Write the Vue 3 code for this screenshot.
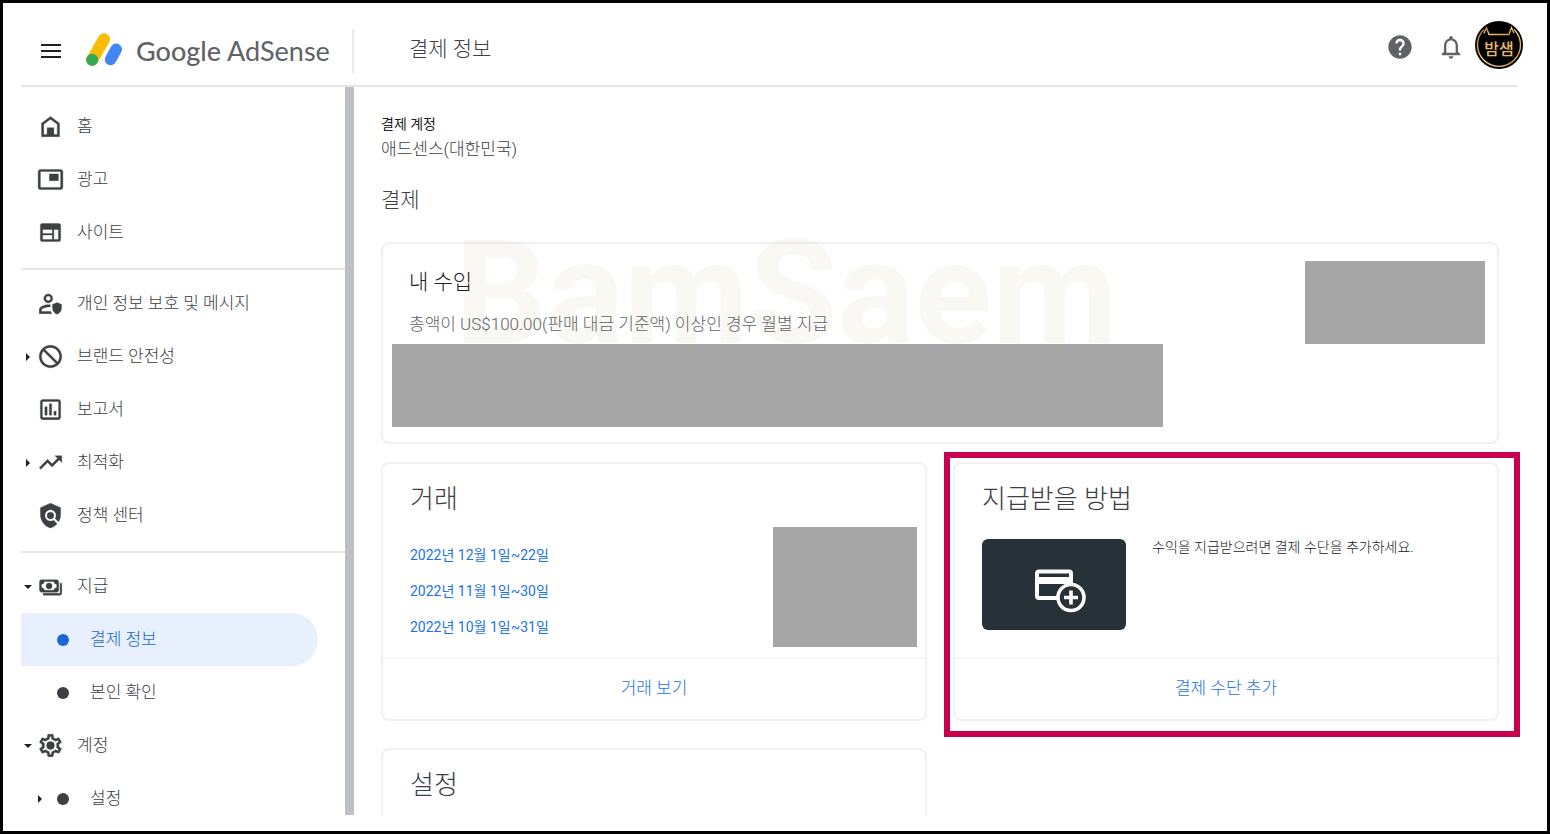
<template>
  <div class="page">
    <header class="header">
      <div class="header-left">
        <button class="menu-btn" aria-label="메뉴">
          <svg width="20" height="14" viewBox="0 0 20 14">
            <path d="M0 1h20M0 7h20M0 13h20" stroke="#202124" stroke-width="2" />
          </svg>
        </button>
        <a class="logo" href="#">
          <svg width="36" height="37" viewBox="0 0 36 37">
            <path d="M18 6.3L6.3 26.7" stroke="#fbbc04" stroke-width="12" stroke-linecap="round" />
            <path d="M30.2 16.2L24.6 26.5" stroke="#4285f4" stroke-width="11.5" stroke-linecap="round" />
            <circle cx="6.2" cy="26.8" r="6.1" fill="#34a853" />
          </svg>
          <span class="logo-text"><b>Google</b> AdSense</span>
        </a>
      </div>
      <h1 class="header-title">결제 정보</h1>
      <div class="header-right">
        <button class="icon-btn help" aria-label="도움말">
          <svg width="28" height="28" viewBox="0 0 24 24" fill="#5f6368">
            <path d="M12 2C6.48 2 2 6.48 2 12s4.48 10 10 10 10-4.48 10-10S17.52 2 12 2zm1 17h-2v-2h2v2zm2.07-7.75l-.9.92C13.45 12.9 13 13.5 13 15h-2v-.5c0-1.1.45-2.1 1.17-2.83l1.24-1.26c.37-.36.59-.86.59-1.41 0-1.1-.9-2-2-2s-2 .9-2 2H8c0-2.21 1.79-4 4-4s4 1.79 4 4c0 .88-.36 1.68-.93 2.25z" />
          </svg>
        </button>
        <button class="icon-btn bell" aria-label="알림">
          <svg width="28" height="28" viewBox="0 0 24 24" fill="#5f6368">
            <path d="M12 22c1.1 0 2-.9 2-2h-4c0 1.1.89 2 2 2zm6-6v-5c0-3.07-1.64-5.64-4.5-6.32V4c0-.83-.67-1.5-1.5-1.5s-1.5.67-1.5 1.5v.68C7.63 5.36 6 7.92 6 11v5l-2 2v1h16v-1l-2-2zm-2 1H8v-6c0-2.48 1.51-4.5 4-4.5s4 2.02 4 4.5v6z" />
          </svg>
        </button>
        <button class="avatar" aria-label="계정">
          <svg width="48" height="48" viewBox="0 0 48 48">
            <defs>
              <linearGradient id="gold" x1="0" y1="0" x2="1" y2="1">
                <stop offset="0" stop-color="#b57a2c" />
                <stop offset="0.5" stop-color="#f3cf85" />
                <stop offset="1" stop-color="#c98f3c" />
              </linearGradient>
            </defs>
            <circle cx="24" cy="24" r="24" fill="#000" />
            <path d="M9 8.5A21.5 21.5 0 1 0 39 8.5" fill="none" stroke="url(#gold)" stroke-width="1.4" />
            <path d="M9 12.5L11.5 6.5L14 13.5H34L36.5 6.5L39 12.5" fill="none" stroke="url(#gold)" stroke-width="1.3" />
          </svg>
          <span>밤샘</span>
        </button>
      </div>
    </header>
    <hr class="header-line" />

    <div class="body">
      <nav class="sidebar">
        <ul v-for="(group, gi) in groups" :key="gi" class="nav-group">
          <li v-for="item in group" :key="item.label">
            <a href="#" class="nav-item" :class="{ sub: item.sub, active: item.active }">
              <span class="caret-box"><i v-if="item.caret" :class="['caret', item.caret]"></i></span>
              <span v-if="item.sub" class="dot"></span>
              <svg v-else class="nav-icon" width="27" height="27" viewBox="0 0 24 24">
                <path :d="icons[item.icon]" fill-rule="evenodd" />
              </svg>
              <span class="nav-label">{{ item.label }}</span>
            </a>
          </li>
        </ul>
      </nav>
      <div class="scroll-strip"></div>

      <main class="main">
        <div class="account-label">결제 계정</div>
        <div class="account-name">애드센스(대한민국)</div>
        <h2 class="section-title">결제</h2>

        <section class="card earnings">
          <div class="watermark" aria-hidden="true">BamSaem</div>
          <div class="earnings-main">
            <h3>내 수입</h3>
            <p>총액이 US$100.00(판매 대금 기준액) 이상인 경우 월별 지급</p>
            <div class="mask mask-wide"></div>
          </div>
          <div class="mask mask-amount"></div>
        </section>

        <div class="card-grid">
          <section class="card">
            <h3 class="card-title">거래</h3>
            <div class="card-row">
              <ul class="dates">
                <li v-for="d in dates" :key="d"><a href="#">{{ d }}</a></li>
              </ul>
              <div class="mask mask-square"></div>
            </div>
            <div class="card-footer"><a href="#">거래 보기</a></div>
          </section>

          <section class="card highlighted">
            <h3 class="card-title">지급받을 방법</h3>
            <div class="card-row">
              <svg class="tile" width="144" height="91" viewBox="0 0 144 91">
                <rect width="144" height="91" rx="6" fill="#263238" />
                <rect x="55" y="32.5" width="34" height="26.5" rx="2" fill="none" stroke="#fff" stroke-width="4" />
                <path d="M55 38h34v7H55z" fill="#fff" />
                <circle cx="89" cy="58.5" r="13" fill="#263238" stroke="#fff" stroke-width="3.6" />
                <path d="M82 58.5h14M89 51.5v14" stroke="#fff" stroke-width="3.6" />
              </svg>
              <p class="hint">수익을 지급받으려면 결제 수단을 추가하세요.</p>
            </div>
            <div class="card-footer"><a href="#">결제 수단 추가</a></div>
          </section>

          <section class="card settings">
            <h3 class="card-title">설정</h3>
          </section>
        </div>
      </main>
    </div>
  </div>
</template>

<script setup>
const groups = [
  [
    { label: '홈', icon: 'home' },
    { label: '광고', icon: 'ads' },
    { label: '사이트', icon: 'sites' }
  ],
  [
    { label: '개인 정보 보호 및 메시지', icon: 'privacy' },
    { label: '브랜드 안전성', icon: 'block', caret: 'right' },
    { label: '보고서', icon: 'report' },
    { label: '최적화', icon: 'trend', caret: 'right' },
    { label: '정책 센터', icon: 'policy' }
  ],
  [
    { label: '지급', icon: 'payments', caret: 'down' },
    { label: '결제 정보', sub: true, active: true },
    { label: '본인 확인', sub: true },
    { label: '계정', icon: 'settings', caret: 'down' },
    { label: '설정', sub: true, caret: 'right' }
  ]
]

const dates = ['2022년 12월 1일~22일', '2022년 11월 1일~30일', '2022년 10월 1일~31일']

const icons = {
  home: 'M12 3L4 9v12h16V9l-8-6zm6 16H6v-9l6-4.5 6 4.5v9zM9 13h6v6H9z',
  ads: 'M19 7h-8v6h8V7zm2-4H3c-1.1 0-2 .9-2 2v14c0 1.1.9 1.98 2 1.98h18c1.1 0 2-.88 2-1.98V5c0-1.1-.9-2-2-2zm0 16.01H3V4.98h18v14.03z',
  sites: 'M4.5 4h15c.8 0 1.5.7 1.5 1.5v13c0 .8-.7 1.5-1.5 1.5h-15c-.8 0-1.5-.7-1.5-1.5v-13C3 4.7 3.7 4 4.5 4zM5 9.3v3.6h8.6V9.3zM5 14.2v4h8.6v-4zM15 9.3v8.9h4V9.3z',
  privacy: 'M10 3.5a4 4 0 1 0 0 8a4 4 0 1 0 0-8zM10 5.4a2.1 2.1 0 1 1 0 4.2a2.1 2.1 0 1 1 0-4.2zM10 13c-3 0-8 1.4-8 4.6V21h11.2c-.5-.6-.8-1.2-1-1.9H4v-1.5c0-1 3-2.6 7.8-2.6v-1.9zM17.8 11.2l4 1.6v3.2c0 2.6-1.6 4.7-4 5.5c-2.4-.8-4-2.9-4-5.5v-3.2z',
  block: 'M12 2C6.48 2 2 6.48 2 12s4.48 10 10 10 10-4.48 10-10S17.52 2 12 2zM4 12c0-1.85.63-3.55 1.69-4.9L16.9 18.31C15.55 19.37 13.85 20 12 20c-4.42 0-8-3.58-8-8zm14.31 4.9L7.1 5.69C8.45 4.63 10.15 4 12 4c4.42 0 8 3.58 8 8 0 1.85-.63 3.55-1.69 4.9z',
  report: 'M5 3h14c1.1 0 2 .9 2 2v14c0 1.1-.9 2-2 2H5c-1.1 0-2-.9-2-2V5c0-1.1.9-2 2-2zM4.8 4.8v14.4h14.4V4.8zM7 9.5h2V17H7zM11 6.8h2V17h-2zM15 13.5h2V17h-2z',
  trend: 'M16 6l2.29 2.29-4.88 4.88-4-4L2 16.59 3.41 18l6-6 4 4 6.3-6.29L22 12V6z',
  policy: 'M21 5l-9-4-9 4v6c0 5.55 3.84 10.74 9 12 2.3-.56 4.33-1.9 5.88-3.71l-3.12-3.12c-1.94 1.29-4.58 1.07-6.29-.64-1.95-1.95-1.95-5.12 0-7.07 1.95-1.95 5.12-1.95 7.07 0 1.71 1.71 1.92 4.35.64 6.29l2.9 2.9C20.29 15.69 21 13.38 21 11V5zM12 9a3 3 0 1 0 0 6a3 3 0 1 0 0-6z',
  payments: 'M4 6h13.5c1 0 1.8.8 1.8 1.8v7.4c0 1-.8 1.8-1.8 1.8H4c-1 0-1.8-.8-1.8-1.8V7.8C2.2 6.8 3 6 4 6zM6.5 7.6C6.5 9 5.3 9.9 4 9.9v3.2c1.3 0 2.5.9 2.5 2.3h8.5c0-1.4 1.2-2.3 2.5-2.3V9.9c-1.3 0-2.5-.9-2.5-2.3zM10.75 8.8a2.7 2.7 0 1 0 0 5.4a2.7 2.7 0 1 0 0-5.4zM20.5 9H22v8.9c0 1-.8 1.8-1.8 1.8H5.5v-1.6h15z',
  settings: 'M19.43 12.98c.04-.32.07-.64.07-.98 0-.34-.03-.66-.07-.98l2.11-1.65c.19-.15.24-.42.12-.64l-2-3.46c-.09-.16-.26-.25-.44-.25-.06 0-.12.01-.17.03l-2.49 1c-.52-.4-1.08-.73-1.69-.98l-.38-2.65C14.46 2.18 14.25 2 14 2h-4c-.25 0-.46.18-.49.42l-.38 2.65c-.61.25-1.17.59-1.69.98l-2.49-1c-.06-.02-.12-.03-.18-.03-.17 0-.34.09-.43.25l-2 3.46c-.13.22-.07.49.12.64l2.11 1.65c-.04.32-.07.65-.07.98 0 .33.03.66.07.98l-2.11 1.65c-.19.15-.24.42-.12.64l2 3.46c.09.16.26.25.44.25.06 0 .12-.01.17-.03l2.49-1c.52.4 1.08.73 1.69.98l.38 2.65c.03.24.24.42.49.42h4c.25 0 .46-.18.49-.42l.38-2.65c.61-.25 1.17-.59 1.69-.98l2.49 1c.06.02.12.03.18.03.17 0 .34-.09.43-.25l2-3.46c.12-.22.07-.49-.12-.64l-2.11-1.65zm-1.98-1.71c.04.31.05.52.05.73 0 .21-.02.43-.05.73l-.14 1.13.89.7 1.08.84-.7 1.21-1.27-.51-1.04-.42-.9.68c-.43.32-.84.56-1.25.73l-1.06.43-.16 1.13-.2 1.35h-1.4l-.19-1.35-.16-1.13-1.06-.43c-.43-.18-.83-.41-1.23-.71l-.91-.7-1.06.43-1.27.51-.7-1.21 1.08-.84.89-.7-.14-1.13c-.03-.31-.05-.54-.05-.74s.02-.43.05-.73l.14-1.13-.89-.7-1.08-.84.7-1.21 1.27.51 1.04.42.9-.68c.43-.32.84-.56 1.25-.73l1.06-.43.16-1.13.2-1.35h1.39l.19 1.35.16 1.13 1.06.43c.43.18.83.41 1.23.71l.91.7 1.06-.43 1.27-.51.7 1.21-1.07.85-.89.7.14 1.13zM12 8.5a3.5 3.5 0 1 0 0 7a3.5 3.5 0 1 0 0-7z'
}
</script>

<style>
body {
  background: #fff;
}
</style>

<style scoped>
* {
  box-sizing: border-box;
}
.page {
  height: 100vh;
  border: 3px solid #000;
  padding: 0 0 16px 18px;
  display: flex;
  flex-direction: column;
  background: #fff;
  color: #3c4043;
  font-family: Roboto, "Noto Sans CJK KR", sans-serif;
  font-size: 17px;
  font-weight: 300;
}
h1, h2, h3, p, ul {
  margin: 0;
  padding: 0;
  font-weight: inherit;
}
ul {
  list-style: none;
}
a {
  color: #1a73e8;
  text-decoration: none;
}
button {
  border: none;
  background: none;
  padding: 0;
  cursor: pointer;
  font-family: inherit;
}
svg {
  display: block;
}

/* header */
.header {
  flex: none;
  height: 82px;
  padding-right: 24px;
  display: flex;
}
.header-left {
  width: 333px;
  height: 44px;
  margin-top: 26px;
  padding-left: 20px;
  border-right: 2px solid #e8eaed;
  display: flex;
  align-items: center;
}
.logo {
  margin-left: 25px;
  display: flex;
  align-items: center;
  gap: 14px;
}
.logo-text {
  color: #5f6368;
  font-family: Lato, sans-serif;
  font-size: 27px;
  font-weight: 400;
  line-height: 34px;
}
.logo-text b {
  font-weight: 500;
}
.header-title {
  margin: 26px 0 0 55px;
  font-size: 21px;
  line-height: 40px;
}
.header-right {
  margin-left: auto;
  height: 84px;
  display: flex;
  align-items: center;
}
.icon-btn {
  padding-top: 4px;
}
.help {
  margin-right: 23px;
}
.bell {
  margin-right: 10px;
}
.avatar {
  position: relative;
  width: 48px;
  height: 48px;
}
.avatar span {
  position: absolute;
  inset: 13px 0 auto;
  color: #e9b765;
  font-family: "Noto Sans CJK KR", sans-serif;
  font-size: 16px;
  font-weight: 500;
  line-height: 28px;
  text-align: center;
}
.header-line {
  flex: none;
  width: auto;
  height: 2px;
  margin: 0 30px 0 0;
  border: none;
  background: #e4e5e9;
}

/* sidebar */
.body {
  flex: 1;
  min-height: 0;
  display: flex;
  overflow: hidden;
}
.sidebar {
  flex: none;
  width: 324px;
  padding-top: 6px;
}
.nav-group {
  padding: 7px 0 9px;
}
.nav-group + .nav-group {
  border-top: 2px solid #e4e6e9;
}
.nav-item {
  height: 53px;
  margin-right: 27px;
  display: flex;
  align-items: center;
  color: #3c4043;
  border-radius: 0 27px 27px 0;
}
.nav-item.sub {
  padding-left: 12px;
}
.nav-item.active {
  background: #e8f0fe;
  color: #1967d2;
}
.caret-box {
  width: 16px;
  padding-right: 2px;
  display: flex;
  justify-content: center;
}
.caret {
  border: 4px solid transparent;
}
.caret.right {
  border-left-color: #202124;
  border-right: none;
}
.caret.down {
  border-top-color: #202124;
  border-bottom: none;
}
.nav-icon {
  fill: #3c4043;
  stroke: #3c4043;
  stroke-width: 0.3;
  margin-right: 13px;
}
.dot {
  width: 12px;
  height: 12px;
  margin: 0 21px 0 8px;
  border-radius: 50%;
  background: currentColor;
}
.nav-label {
  line-height: 24px;
  padding-bottom: 2px;
}
.scroll-strip {
  flex: none;
  width: 9px;
  background: #bdc1c6;
}

/* content */
.main {
  flex: 1;
  min-width: 0;
  padding: 27px 48px 0 27px;
}
.account-label {
  color: #202124;
  font-size: 14px;
  font-weight: 400;
  line-height: 20px;
}
.account-name {
  line-height: 30px;
}
.section-title {
  margin: 20px 0 26px;
  font-size: 21px;
  line-height: 32px;
}
.card {
  border: 2px solid #f0f1f3;
  border-radius: 8px;
}
.mask {
  flex: none;
  background: #a6a6a6;
}
.earnings {
  position: relative;
  isolation: isolate;
  margin-bottom: 18px;
  padding: 17px 12px 15px 9px;
  display: flex;
  justify-content: space-between;
  align-items: flex-start;
}
.earnings-main {
  flex: 1;
  padding-top: 6px;
}
.earnings h3 {
  padding-left: 17px;
  color: #202124;
  font-size: 21px;
  line-height: 30px;
}
.earnings p {
  margin: 15px 0 8px;
  padding-left: 17px;
  color: #5f6368;
  line-height: 24px;
}
.mask-wide {
  width: calc(100% - 142px);
  height: 83px;
}
.mask-amount {
  width: 180px;
  height: 83px;
}
.watermark {
  position: absolute;
  z-index: -1;
  left: 72px;
  top: -34px;
  color: rgba(190, 170, 100, 0.08);
  font-size: 144px;
  font-weight: 700;
  line-height: 168px;
}
.card-grid {
  display: grid;
  grid-template-columns: 1fr 1fr;
  gap: 27px 26px;
}
.card-title {
  padding: 17px 27px 10px;
  font-size: 26px;
  line-height: 36px;
}
.card-row {
  min-height: 130px;
  padding: 0 8px 10px 27px;
  display: flex;
  justify-content: space-between;
}
.dates {
  padding-top: 10px;
}
.dates li {
  font-size: 14px;
  font-weight: 400;
  line-height: 36px;
}
.mask-square {
  width: 144px;
  height: 120px;
}
.card-footer {
  height: 62px;
  border-top: 2px solid #f5f5f7;
  line-height: 58px;
  text-align: center;
}
.highlighted {
  position: relative;
}
.highlighted::after {
  content: "";
  position: absolute;
  inset: -12px -23px -18px -11px;
  border: 6px solid #c90050;
  pointer-events: none;
}
.tile {
  flex: none;
  margin: 12px 26px 0 0;
}
.hint {
  flex: 1;
  padding-top: 10px;
  color: #202124;
  font-size: 14px;
  line-height: 20px;
}
.settings {
  height: 259px;
}
</style>
